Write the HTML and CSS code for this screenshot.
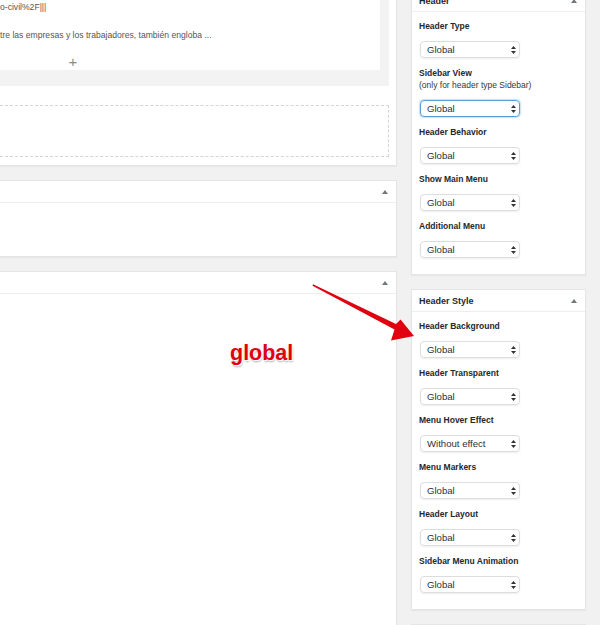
FILE: index.html
```html
<!DOCTYPE html>
<html lang="en">
<head>
  <meta charset="UTF-8" />
  <title>Header Settings</title>
  <link rel="stylesheet" href="styles.css">
</head>
<body>
<div class="page">

  <!-- Main column -->
  <div class="main">
    <div class="postbox first">
      <div class="preview">
        <div class="card">
          <p>o-civil%2F|||</p>
          <p>&nbsp;</p>
          <p>tre las empresas y los trabajadores, también engloba ...</p>
          <div class="add">+</div>
        </div>
      </div>
      <div class="dropzone"></div>
    </div>

    <div class="postbox short">
      <div class="box-head">
        <svg class="toggle" width="6" height="4" viewBox="0 0 6 4"><path d="M0 4 L3 0 L6 4 Z" fill="#72777c"/></svg>
      </div>
    </div>

    <div class="postbox tall">
      <div class="box-head">
        <svg class="toggle" width="6" height="4" viewBox="0 0 6 4"><path d="M0 4 L3 0 L6 4 Z" fill="#72777c"/></svg>
      </div>
    </div>
  </div>

  <!-- Sidebar -->
  <div class="side">
    <div class="panel">
      <div class="panel-head">
        <span>Header</span>
        <svg class="toggle" width="6" height="4" viewBox="0 0 6 4"><path d="M0 4 L3 0 L6 4 Z" fill="#72777c"/></svg>
      </div>
      <div class="panel-body">
        <div class="field">
          <label>Header Type</label>
          <div class="select"><span>Global</span><svg width="5" height="8" viewBox="0 0 5 8"><path d="M0 3 L2.5 0 L5 3 Z M0 5 L2.5 8 L5 5 Z" fill="#333"/></svg></div>
        </div>
        <div class="field">
          <label>Sidebar View</label>
          <div class="note">(only for header type Sidebar)</div>
          <div class="select focus"><span>Global</span><svg width="5" height="8" viewBox="0 0 5 8"><path d="M0 3 L2.5 0 L5 3 Z M0 5 L2.5 8 L5 5 Z" fill="#333"/></svg></div>
        </div>
        <div class="field">
          <label>Header Behavior</label>
          <div class="select"><span>Global</span><svg width="5" height="8" viewBox="0 0 5 8"><path d="M0 3 L2.5 0 L5 3 Z M0 5 L2.5 8 L5 5 Z" fill="#333"/></svg></div>
        </div>
        <div class="field">
          <label>Show Main Menu</label>
          <div class="select"><span>Global</span><svg width="5" height="8" viewBox="0 0 5 8"><path d="M0 3 L2.5 0 L5 3 Z M0 5 L2.5 8 L5 5 Z" fill="#333"/></svg></div>
        </div>
        <div class="field">
          <label>Additional Menu</label>
          <div class="select"><span>Global</span><svg width="5" height="8" viewBox="0 0 5 8"><path d="M0 3 L2.5 0 L5 3 Z M0 5 L2.5 8 L5 5 Z" fill="#333"/></svg></div>
        </div>
      </div>
    </div>

    <div class="panel">
      <div class="panel-head">
        <span>Header Style</span>
        <svg class="toggle" width="6" height="4" viewBox="0 0 6 4"><path d="M0 4 L3 0 L6 4 Z" fill="#72777c"/></svg>
      </div>
      <div class="panel-body">
        <div class="field">
          <label>Header Background</label>
          <div class="select"><span>Global</span><svg width="5" height="8" viewBox="0 0 5 8"><path d="M0 3 L2.5 0 L5 3 Z M0 5 L2.5 8 L5 5 Z" fill="#333"/></svg></div>
        </div>
        <div class="field">
          <label>Header Transparent</label>
          <div class="select"><span>Global</span><svg width="5" height="8" viewBox="0 0 5 8"><path d="M0 3 L2.5 0 L5 3 Z M0 5 L2.5 8 L5 5 Z" fill="#333"/></svg></div>
        </div>
        <div class="field">
          <label>Menu Hover Effect</label>
          <div class="select"><span>Without effect</span><svg width="5" height="8" viewBox="0 0 5 8"><path d="M0 3 L2.5 0 L5 3 Z M0 5 L2.5 8 L5 5 Z" fill="#333"/></svg></div>
        </div>
        <div class="field">
          <label>Menu Markers</label>
          <div class="select"><span>Global</span><svg width="5" height="8" viewBox="0 0 5 8"><path d="M0 3 L2.5 0 L5 3 Z M0 5 L2.5 8 L5 5 Z" fill="#333"/></svg></div>
        </div>
        <div class="field">
          <label>Header Layout</label>
          <div class="select"><span>Global</span><svg width="5" height="8" viewBox="0 0 5 8"><path d="M0 3 L2.5 0 L5 3 Z M0 5 L2.5 8 L5 5 Z" fill="#333"/></svg></div>
        </div>
        <div class="field">
          <label>Sidebar Menu Animation</label>
          <div class="select"><span>Global</span><svg width="5" height="8" viewBox="0 0 5 8"><path d="M0 3 L2.5 0 L5 3 Z M0 5 L2.5 8 L5 5 Z" fill="#333"/></svg></div>
        </div>
      </div>
    </div>

    <div class="panel"></div>
  </div>

  <!-- Annotation -->
  <svg class="arrow" width="600" height="625" viewBox="0 0 600 625">
    <polygon points="313,284.3 396,324 400.5,319.5 414,336 391,340.5 394.5,329.5 312.5,285.7" fill="#e0000f"/>
  </svg>
  <div class="callout">global</div>

</div>
</body>
</html>
```

FILE: styles.css
```css
* {
  margin: 0;
  padding: 0;
  box-sizing: border-box;
}

body {
  font-family: "Liberation Sans", Arial, sans-serif;
  background-color: #f1f1f1;
  color: #23282d;
  overflow: hidden;
}

.page {
  position: relative;
  display: flex;
  align-items: flex-start;
  width: 600px;
  height: 625px;
  overflow: hidden;
}

/* Main column */

.main {
  width: 397px;
  display: flex;
  flex-direction: column;
  gap: 14px;
}

.postbox {
  background: #fff;
  border: 1px solid #e5e5e5;
  border-left: none;
  box-shadow: 0 1px 1px rgba(0, 0, 0, 0.04);
}

.postbox.first {
  border-top: none;
  padding-right: 7px;
  padding-bottom: 8px;
}

.preview {
  background: #f3f3f3;
  padding: 0 9px 16px 0;
}

.card {
  background: #fff;
  color: #555;
  font-size: 8.6px;
  padding-bottom: 1px;
}

.card p {
  line-height: 14px;
  height: 14px;
  white-space: nowrap;
}

.add {
  margin-top: 13px;
  width: 146px;
  text-align: center;
  font-size: 15px;
  line-height: 14px;
  color: #888;
  font-weight: 300;
}

.dropzone {
  margin-top: 19px;
  height: 52px;
  border: 1px dashed #d4d4d4;
  border-left: none;
}

.postbox.short {
  height: 77px;
}

.postbox.tall {
  height: 400px;
}

.box-head {
  height: 22px;
  border-bottom: 1px solid #eee;
  display: flex;
  align-items: center;
  justify-content: flex-end;
  padding-right: 8px;
}

/* Sidebar */

.side {
  width: 175px;
  margin-left: 14px;
  margin-top: -11px;
  display: flex;
  flex-direction: column;
  gap: 14px;
}

.panel {
  background: #fff;
  border: 1px solid #e5e5e5;
  box-shadow: 0 1px 1px rgba(0, 0, 0, 0.04);
  min-height: 40px;
}

.panel-head {
  height: 22px;
  border-bottom: 1px solid #eee;
  display: flex;
  align-items: center;
  justify-content: space-between;
  padding: 0 8px 0 7px;
  font-size: 9px;
  font-weight: bold;
}

.panel-body {
  padding: 8px 7px 7px 7px;
}

.field {
  margin-bottom: 9px;
}

.field label {
  display: block;
  font-size: 8.5px;
  font-weight: bold;
  line-height: 12px;
  margin-bottom: 9px;
  white-space: nowrap;
}

.field .note {
  font-size: 8.5px;
  line-height: 12px;
  margin-top: -9px;
  margin-bottom: 9px;
  color: #32373c;
}

.select {
  width: 100px;
  height: 17px;
  margin-left: 1px;
  border: 1px solid #ddd;
  border-radius: 4px;
  box-shadow: 0 1px 2px rgba(0, 0, 0, 0.07);
  display: flex;
  align-items: center;
  justify-content: space-between;
  padding: 0 3px 0 6px;
  font-size: 9.6px;
  color: #2c3136;
}

.select.focus {
  border-color: #5b9dd9;
  box-shadow: 0 0 2px rgba(30, 140, 190, 0.8);
}

/* Annotation */

.arrow {
  position: absolute;
  left: 0;
  top: 0;
}

.callout {
  position: absolute;
  left: 230px;
  top: 341px;
  font-size: 21.5px;
  line-height: 24px;
  font-weight: bold;
  color: #e0000f;
  text-shadow: 1px 1px 0 #fff, 1px 2px 2px rgba(0, 0, 0, 0.3);
}
```
